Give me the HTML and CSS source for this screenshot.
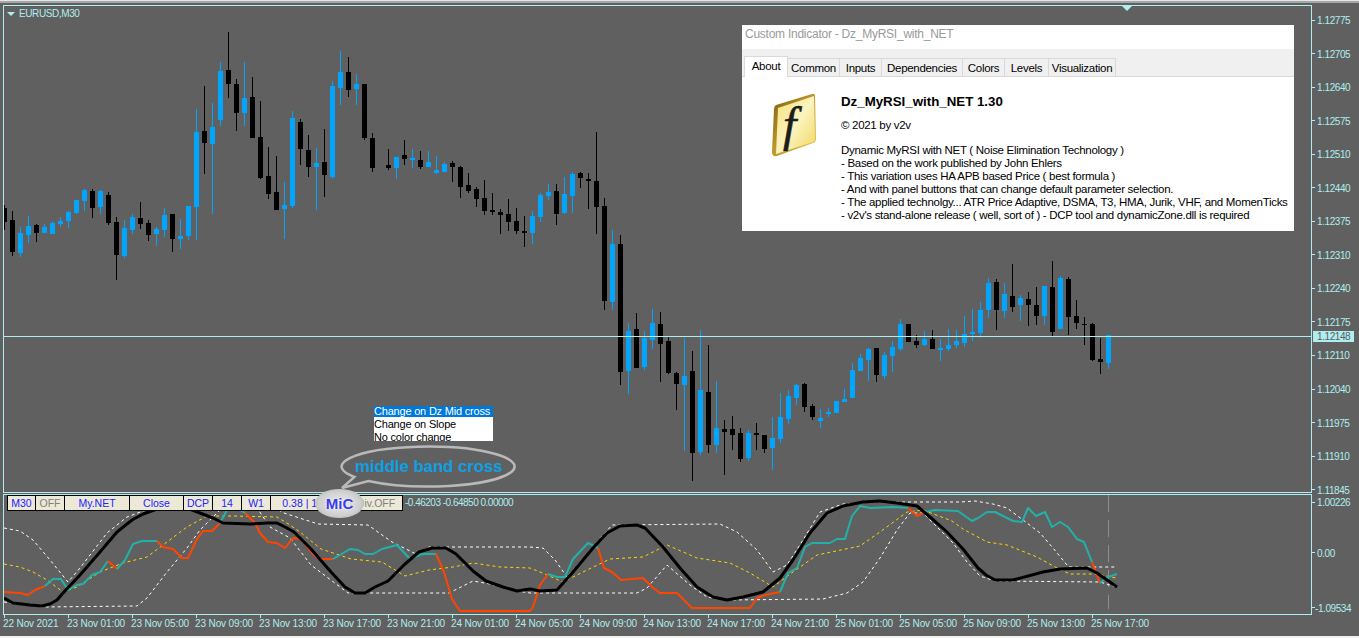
FILE: index.html
```html
<!DOCTYPE html>
<html lang="en">
<head>
<meta charset="utf-8">
<title>EURUSD,M30</title>
<link rel="stylesheet" href="styles.css">
</head>
<body>
<div class="terminal">
  <div class="strip-top"></div>

  <section class="pane pane-main">
    <svg id="candles" class="plot" width="1307" height="486" viewBox="4 6 1307 486"></svg>
  </section>
  <div class="price-axis">
    <div class="price"><i></i><span>1.12775</span></div>
    <div class="price"><i></i><span>1.12705</span></div>
    <div class="price"><i></i><span>1.12640</span></div>
    <div class="price"><i></i><span>1.12575</span></div>
    <div class="price"><i></i><span>1.12510</span></div>
    <div class="price"><i></i><span>1.12440</span></div>
    <div class="price"><i></i><span>1.12375</span></div>
    <div class="price"><i></i><span>1.12310</span></div>
    <div class="price"><i></i><span>1.12240</span></div>
    <div class="price"><i></i><span>1.12175</span></div>
    <div class="price"><i></i><span>1.12110</span></div>
    <div class="price"><i></i><span>1.12040</span></div>
    <div class="price"><i></i><span>1.11975</span></div>
    <div class="price"><i></i><span>1.11910</span></div>
    <div class="price"><i></i><span>1.11845</span></div>
  </div>

  <section class="pane pane-sub">
    <svg class="plot" width="1307" height="119" viewBox="4 495 1307 119">
      <line class="now-line" x1="1108.5" y1="495" x2="1108.5" y2="609"/>
      <polyline class="band" points="4,528 20,531 33,540 50,560 68,582 80,568 107,533 127,517 143,511 160,505 270,505 284,513 318,524 368,525 392,542 416,554 429,547 530,547 543,548 555,560 567,577 580,562 612,525 720,524 737,532 757,550 773,572 787,565 803,540 820,512 843,504 873,502 960,502 975,501 993,504 1007,508 1027,523 1040,533 1053,548 1067,565 1070,567 1116,567"/>
      <polyline class="band" points="4,602 43,607 137,606 147,598 167,572 187,548 200,530 210,520 225,505 255,505 270,527 290,538 311,565 348,593 449,593 473,581 490,584 517,591 530,593 637,593 647,588 667,565 690,585 707,597 727,600 823,599 847,593 863,582 880,558 897,530 910,513 923,513 953,543 967,562 980,576 995,581 1100,582 1116,587"/>
      <polyline class="signal" points="4,564 20,567 33,572 47,580 63,592 77,587 100,572 123,563 147,557 167,542 187,527 207,516 233,516 277,517 290,525 300,532 321,549 351,559 382,562 405,576 429,570 453,567 473,563 500,567 530,568 540,572 563,582 587,570 610,559 643,557 667,545 697,558 730,563 750,573 773,587 793,572 817,555 860,546 880,532 907,512 923,510 952,521 963,529 987,542 1007,545 1037,557 1057,568 1070,574 1097,574 1116,578"/>
      <polyline class="down" points="4,592 20,593 28,595 35,590 45,586"/>
      <polyline class="up" points="45,586 53,579 61,579 68,590 77,585 83,584 92,575 100,572 108,561"/>
      <polyline class="down" points="108,561 117,569"/>
      <polyline class="up" points="117,569 125,560 133,544 142,541 157,541"/>
      <polyline class="down" points="157,541 163,547 173,549 182,558 188,558 197,539 203,531 212,531 220,523"/>
      <polyline class="up" points="220,523 227,510 240,510 245,513"/>
      <polyline class="down" points="245,513 255,523 260,533 268,542 277,543 285,548 293,538 301,539 314,555 319,559 333,559"/>
      <polyline class="up" points="333,559 350,549 358,550 365,554 373,554 382,549 397,545 410,559 422,554 436,554"/>
      <polyline class="down" points="436,554 444,572 452,599 460,611 530,611 533,607 540,585 548,574"/>
      <polyline class="up" points="548,574 557,577 565,577 573,559 588,543 598,548"/>
      <polyline class="down" points="598,548 604,568 612,572 621,580 643,578 652,587 660,593 677,593 692,608 750,608 757,598 765,595 780,592"/>
      <polyline class="up" points="780,592 788,573 797,568 805,547 812,543 830,543 837,539 845,539 852,516 860,506 870,508 893,507 908,508"/>
      <polyline class="down" points="908,508 917,516 925,512"/>
      <polyline class="up" points="925,512 935,510 958,511 972,521 978,518 987,512 995,512 1013,521 1022,522 1028,508 1036,516 1045,512 1052,527 1060,522 1068,527 1077,539 1084,542 1092,562"/>
      <polyline class="down" points="1092,562 1100,583"/>
      <polyline class="up" points="1100,583 1108,577 1117,574"/>
      <polyline class="main" points="4,598 13,603 30,605 42,606 50,604 57,600 63,593 80,575 100,552 117,532 132,520 143,514 157,509 187,508 200,513 213,518 223,523 250,524 267,523 277,523 287,528 294,532 311,549 331,572 345,587 355,593 365,593 375,587 388,581 405,564 419,552 432,548 446,548 456,554 473,571 486,581 503,587 517,591 530,589 540,591 557,590 573,572 593,548 607,533 620,526 637,525 645,528 663,547 680,568 697,587 713,597 727,600 743,597 763,592 780,578 793,560 810,533 827,513 843,506 863,502 880,501 897,503 917,506 930,517 947,532 963,549 978,568 986,575 995,580 1013,580 1043,572 1060,569 1087,568 1097,573 1107,580 1117,587"/>
    </svg>
  </section>
  <div class="price-axis price-axis-sub">
    <div class="price"><i></i><span>1.00226</span></div>
    <div class="price"><i></i><span>0.00</span></div>
    <div class="price"><i></i><span class="neg">-1.09534</span></div>
  </div>

  <div class="time-axis">
    <div class="time">22 Nov 2021</div>
    <div class="time">23 Nov 01:00</div>
    <div class="time">23 Nov 05:00</div>
    <div class="time">23 Nov 09:00</div>
    <div class="time">23 Nov 13:00</div>
    <div class="time">23 Nov 17:00</div>
    <div class="time">23 Nov 21:00</div>
    <div class="time">24 Nov 01:00</div>
    <div class="time">24 Nov 05:00</div>
    <div class="time">24 Nov 09:00</div>
    <div class="time">24 Nov 13:00</div>
    <div class="time">24 Nov 17:00</div>
    <div class="time">24 Nov 21:00</div>
    <div class="time">25 Nov 01:00</div>
    <div class="time">25 Nov 05:00</div>
    <div class="time">25 Nov 09:00</div>
    <div class="time">25 Nov 13:00</div>
    <div class="time">25 Nov 17:00</div>
  </div>
  <div class="strip-bottom"></div>

  <!-- overlays drawn on top of the chart -->
  <div class="legend"><i class="legend-arrow"></i><span>EURUSD,M30</span></div>
  <i class="shift-marker"></i>
  <div class="price-now">1.12148</div>

  <div class="dialog">
    <div class="dialog-title">Custom Indicator - Dz_MyRSI_with_NET</div>
    <div class="tabs">
      <div class="tab tab-active">About</div>
      <div class="tab tab-common">Common</div>
      <div class="tab tab-inputs">Inputs</div>
      <div class="tab tab-deps">Dependencies</div>
      <div class="tab tab-colors">Colors</div>
      <div class="tab tab-levels">Levels</div>
      <div class="tab tab-vis">Visualization</div>
    </div>
    <div class="about">
      <svg class="about-icon" width="46" height="66" viewBox="0 0 46 66">
        <defs>
          <linearGradient id="tile" x1="0" y1="0" x2="1" y2="1">
            <stop offset="0" stop-color="#f7e27a"/>
            <stop offset=".5" stop-color="#fbf3bf"/>
            <stop offset="1" stop-color="#f3d85e"/>
          </linearGradient>
          <linearGradient id="rim" x1="0" y1="0" x2="1" y2="1">
            <stop offset="0" stop-color="#7d5f16"/>
            <stop offset=".5" stop-color="#c09a28"/>
            <stop offset="1" stop-color="#ecd05a"/>
          </linearGradient>
        </defs>
        <path d="M5 12 Q3 13 3 16 L1 59 Q1 64 6 63 L42 50 Q45 49 45 46 L44 3 Q44 0 41 1 Z" fill="url(#rim)"/>
        <path d="M7 15 L43 3 L44 46 Q44 48 42 49 L5 61 Z" fill="url(#tile)"/>
        <text class="about-f" x="12" y="48">f</text>
      </svg>
      <div class="about-text">
        <h1 class="about-name">Dz_MyRSI_with_NET 1.30</h1>
        <p class="about-copy">© 2021 by v2v</p>
        <p class="about-desc">Dynamic MyRSI with NET ( Noise Elimination Technology )<br>
- Based on the work published by John Ehlers<br>
- This variation uses HA APB based Price ( best formula )<br>
- And with panel buttons that can change default parameter selection.<br>
- The applied technolgy... ATR Price Adaptive, DSMA, T3, HMA, Jurik, VHF, and MomenTicks<br>
- v2v's stand-alone release ( well, sort of ) - DCP tool and dynamicZone.dll is required</p>
      </div>
    </div>
  </div>

  <ul class="dropdown">
    <li class="dropdown-on">Change on Dz Mid cross</li>
    <li>Change on Slope</li>
    <li>No color change</li>
  </ul>

  <div class="bubble">
    <svg class="bubble-shape" width="180" height="48" viewBox="339 443 180 48">
      <path d="M354.4 477A86.5 20 0 1 1 368.4 481L342 488Z"/>
    </svg>
    <span class="bubble-text">middle band cross</span>
  </div>

  <div class="panel">
    <div class="btn w29">M30</div>
    <div class="btn btn-off w29">OFF</div>
    <div class="btn w65">My.NET</div>
    <div class="btn w54">Close</div>
    <div class="btn w29">DCP</div>
    <div class="btn w29">14</div>
    <div class="btn w29">W1</div>
    <div class="btn w79">0.38 | 13.00</div>
    <div class="btn btn-off w53">Div.OFF</div>
    <div class="panel-values">-0.46203 -0.64850 0.00000</div>
  </div>

  <div class="mic">MiC</div>
</div>
<script src="chart.js"></script>
</body>
</html>
```

FILE: styles.css
```css
* { box-sizing: border-box; }
html, body { margin: 0; padding: 0; overflow: hidden; }
body { background: #606060; font-family: "Liberation Sans", Arial, sans-serif; }

.terminal {
  position: relative;
  width: 1359px;
  height: 638px;
  overflow: hidden;
  background: #606060;
  color: #afeeee;
  display: grid;
  grid-template-columns: 1312px 47px;
  grid-template-rows: 5px 489px 121px 21px 2px;
}

.strip-top {
  grid-column: 1 / 3;
  height: 3px;
  border-top: 1px solid #e6e6e6;
  background: #a6a6a6;
}
.strip-bottom {
  grid-column: 1 / 3;
  background: #f0f0f0;
}

.pane {
  position: relative;
  margin-left: 3px;
  border: 1px solid #afeeee;
  overflow: hidden;
}
.pane-main { height: 488px; }
.pane-sub { height: 121px; }
.plot { position: absolute; left: 0; top: 0; display: block; }

/* price scale */
.price-axis {
  padding-top: 9px;
  font-size: 10px;
  letter-spacing: -0.42px;
  line-height: 12px;
}
.price {
  display: flex;
  align-items: center;
  gap: 2px;
  height: 12px;
  margin-bottom: 21.55px;
  white-space: nowrap;
}
.price span { position: relative; top: 1px; }
.price i { width: 3px; height: 1px; background: #afeeee; flex: none; }
.price-axis-sub { padding-top: 2px; }
.price-axis-sub .price:nth-child(1) { margin-bottom: 38.5px; }
.price-axis-sub .price:nth-child(2) { margin-bottom: 43px; }
.neg { margin-left: -2px; }

/* time scale */
.time-axis {
  grid-column: 1 / 3;
  display: flex;
  padding-left: 4px;
  font-size: 10px;
  line-height: 12px;
  letter-spacing: -0.12px;
}
.time {
  position: relative;
  flex: 0 0 64px;
  margin: 0;
  padding-top: 3px;
  border-left: 1px solid #afeeee;
  height: 3px;
  white-space: nowrap;
  text-indent: -2px;
}

/* indicator lines */
polyline { fill: none; stroke-linejoin: round; }
.main { stroke: #000; stroke-width: 3; }
.up { stroke: #20b2aa; stroke-width: 2; }
.down { stroke: #ff4500; stroke-width: 2; }
.signal { stroke: #ffd700; stroke-width: 1; stroke-dasharray: 3 3; }
.band { stroke: #fff; stroke-width: 1; stroke-dasharray: 3 3; }
.now-line { stroke: #8f8f8f; stroke-width: 1; stroke-dasharray: 17 8; }

/* legend and markers */
.legend {
  position: absolute;
  left: 7px;
  top: 8px;
  display: flex;
  align-items: center;
  gap: 4px;
  font-size: 10px;
  letter-spacing: -0.4px;
  line-height: 12px;
}
.legend-arrow {
  width: 0;
  height: 0;
  border-left: 4px solid transparent;
  border-right: 4px solid transparent;
  border-top: 4px solid #afeeee;
}
.shift-marker {
  position: absolute;
  left: 1122px;
  top: 6px;
  width: 0;
  height: 0;
  border-left: 5px solid transparent;
  border-right: 5px solid transparent;
  border-top: 5px solid #afeeee;
}
.price-now {
  position: absolute;
  left: 1313px;
  top: 331px;
  width: 41px;
  height: 11px;
  padding-left: 4px;
  background: #afeeee;
  color: #606060;
  font-size: 10px;
  letter-spacing: -0.42px;
  line-height: 12px;
}

/* about dialog */
.dialog {
  position: absolute;
  left: 742px;
  top: 25px;
  width: 552px;
  height: 206px;
  background: #fff;
  color: #000;
  font-size: 11.5px;
  letter-spacing: -0.3px;
  line-height: 13px;
}
.dialog-title {
  height: 24px;
  padding: 1px 0 0 3px;
  color: #9a9a9a;
  font-size: 12px;
  letter-spacing: -0.25px;
  line-height: 17px;
}
.tabs {
  height: 28px;
  display: flex;
  align-items: flex-end;
  padding-left: 2px;
  background: #f0f0f0;
  border-bottom: 1px solid #d9d9d9;
}
.tab {
  height: 18px;
  border: 1px solid #d9d9d9;
  border-left: 0;
  border-bottom: 0;
  text-align: center;
  line-height: 19px;
  white-space: nowrap;
}
.tab-active {
  position: relative;
  width: 44px;
  height: 21px;
  margin-bottom: -1px;
  background: #fff;
  border-left: 1px solid #d9d9d9;
  line-height: 19px;
}
.tab-common { width: 52px; }
.tab-inputs { width: 42px; }
.tab-deps { width: 81px; }
.tab-colors { width: 42px; }
.tab-levels { width: 44px; }
.tab-vis { width: 67px; }

.about {
  display: flex;
  padding: 16px 0 0 29px;
}
.about-icon { flex: none; }
.about-f {
  font-family: "Liberation Serif", serif;
  font-style: italic;
  font-size: 48px;
  fill: #1c1c1c;
  stroke: #1c1c1c;
  stroke-width: 0.6;
}
.about-text { margin-left: 24px; margin-top: 1px; }
.about-name { margin: 0; font-size: 13.3px; letter-spacing: 0; font-weight: bold; line-height: 15px; }
.about-copy { margin: 9px 0 0; line-height: 14px; }
.about-desc { margin: 12px 0 0; white-space: nowrap; }

/* parameter dropdown */
.dropdown {
  position: absolute;
  left: 374px;
  top: 406px;
  width: 119px;
  height: 35px;
  margin: 0;
  padding: 0;
  overflow: hidden;
  list-style: none;
  background: #fff;
  color: #000;
  font-size: 11px;
  letter-spacing: -0.2px;
  line-height: 13px;
}
.dropdown li { height: 13px; margin-top: -1px; margin-bottom: 1px; white-space: nowrap; }
.dropdown-on { background: #0078d7; color: #fff; height: 11px !important; margin: 0 !important; line-height: 11px; }
.dropdown li:nth-child(2) { margin-top: 1px; }

/* speech bubble */
.bubble {
  position: absolute;
  left: 339px;
  top: 443px;
  width: 180px;
  height: 48px;
}
.bubble-shape { position: absolute; left: 0; top: 0; }
.bubble-shape path { fill: none; stroke: #b9b9b9; stroke-width: 2.5; }
.bubble-text {
  position: absolute;
  left: 16px;
  top: 14px;
  color: #0ea0e6;
  font-size: 16.7px;
  font-weight: bold;
  line-height: 20px;
  white-space: nowrap;
}

/* button panel */
.panel {
  position: absolute;
  left: 7px;
  top: 495px;
  display: flex;
  height: 16px;
}
.btn {
  height: 16px;
  background: #ece9d8;
  border: 1px solid #000;
  border-left: 0;
  color: #2222ff;
  font-size: 10.5px;
  line-height: 15px;
  text-align: center;
  white-space: nowrap;
}
.btn:first-child { border-left: 1px solid #000; }
.btn-off { color: #808080; }
.w29 { width: 29px; }
.w54 { width: 54px; }
.w65 { width: 65px; }
.w79 { width: 79px; }
.w53 { width: 53px; }
.panel-values {
  margin-left: 2px;
  font-size: 10px;
  letter-spacing: -0.5px;
  line-height: 16px;
  white-space: nowrap;
}

.mic {
  position: absolute;
  left: 315px;
  top: 489px;
  width: 49px;
  height: 29px;
  border-radius: 50%;
  background: radial-gradient(ellipse at center, #ececec 0%, #cfcfcf 60%, #9c9c9c 100%);
  color: #3a3aef;
  font-size: 15px;
  font-weight: bold;
  line-height: 29px;
  text-align: center;
  text-shadow: 0 0 2px #fff;
}
```

FILE: chart.js
```js
// k, colour (1 = up/blue, 0 = down/black), body top, body bottom, wick top, wick bottom.
var BARS = [
[0,0,208,222,205,230],[1,0,220,252,211,256],[2,1,233,253,227,257],[3,1,226,235,216,243],
[4,0,225,233,224,242],[5,1,227,233,224,233],[6,1,223,234,221,234],[7,1,221,224,217,227],
[8,1,212,221,211,228],[9,1,200,213,200,214],[10,1,190,201,189,211],[11,0,191,208,189,218],
[12,1,191,207,190,214],[13,0,195,223,192,225],[14,0,222,255,217,280],[15,1,228,256,220,258],
[16,1,217,230,214,234],[17,0,218,224,202,229],[18,0,223,235,220,241],[19,1,229,234,227,246],
[20,1,215,230,208,237],[21,0,214,239,214,252],[22,1,236,239,219,249],[23,1,206,236,206,240],
[24,1,132,207,109,240],[25,0,131,143,86,174],[26,1,127,144,103,214],[27,1,71,120,62,126],
[28,0,70,84,32,98],[29,0,84,113,79,131],[30,1,98,113,62,126],[31,0,97,138,77,138],
[32,0,137,178,101,179],[33,0,176,194,147,199],[34,0,192,210,156,210],[35,1,205,209,182,239],
[36,1,118,206,111,208],[37,0,122,149,119,165],[38,0,150,167,135,177],[39,1,163,167,148,210],
[40,0,162,175,129,197],[41,1,86,177,81,179],[42,1,72,88,51,105],[43,0,72,90,57,97],
[44,1,84,89,74,105],[45,0,84,138,84,140],[46,0,138,168,133,172],[48,0,165,168,149,170],
[49,1,157,168,157,179],[50,0,155,159,140,165],[51,1,158,160,149,168],[52,0,160,167,151,169],
[53,1,162,167,151,167],[54,1,170,173,156,174],[55,1,164,172,162,172],[56,0,163,167,161,182],
[57,0,167,187,166,198],[58,0,185,191,173,193],[59,0,189,199,187,207],[60,0,198,211,180,215],
[61,0,210,212,193,215],[62,0,212,215,209,234],[63,0,214,222,199,231],[64,0,221,231,208,234],
[65,0,231,233,216,247],[66,1,216,233,211,244],[67,1,195,217,193,222],[68,1,192,196,184,200],
[69,0,191,214,184,225],[70,1,194,213,177,214],[71,1,174,196,172,213],[72,0,173,178,172,188],
[73,0,179,181,173,209],[74,0,181,207,132,234],[75,0,206,301,198,310],[76,1,244,302,230,310],
[77,0,244,372,235,385],[78,1,331,371,323,394],[79,0,329,368,313,368],[80,1,338,367,331,370],
[81,1,323,340,309,349],[82,0,324,344,312,382],[83,0,341,373,336,374],[84,0,373,384,372,410],
[85,1,376,385,338,451],[86,0,371,453,351,481],[87,1,390,452,330,455],[88,0,392,445,345,453],
[89,1,428,445,381,453],[90,0,429,432,420,475],[91,0,429,435,416,450],[92,0,433,459,428,462],
[93,1,433,458,430,461],[94,0,433,435,423,450],[95,0,435,449,435,453],[96,1,438,448,417,470],
[97,1,417,439,393,443],[98,1,396,419,390,424],[99,1,385,398,384,405],[100,0,384,407,383,412],
[101,0,406,417,404,420],[102,1,418,421,409,428],[103,1,412,414,408,417],[104,1,401,413,401,413],
[105,1,399,402,389,402],[106,1,370,398,363,398],[107,1,358,371,354,371],[108,1,349,360,348,381],
[109,0,348,375,348,382],[110,1,355,376,352,379],[111,1,347,356,341,372],[112,1,324,349,319,351],
[113,0,324,342,324,342],[114,0,341,345,335,348],[115,1,339,345,331,346],[116,0,339,349,330,349],
[117,1,348,350,339,361],[118,1,345,349,329,351],[119,1,341,345,330,348],[120,1,334,343,316,347],
[121,1,332,334,309,341],[122,1,310,333,302,338],[123,1,283,310,278,318],[124,0,282,310,279,330],
[125,1,294,311,283,318],[126,0,296,307,264,312],[127,1,298,305,295,321],[128,0,299,305,292,326],
[129,0,305,316,287,325],[130,1,286,316,286,325],[131,0,287,332,261,336],[132,1,278,329,276,329],
[133,0,279,317,277,335],[134,0,316,323,300,329],[135,0,324,325,317,345],[136,0,324,360,323,361],
[137,0,359,362,338,374],[138,1,335,363,335,369]
];

(function () {
  var svg = document.getElementById('candles');
  var NS = 'http://www.w3.org/2000/svg';
  var d = ['', ''];
  BARS.forEach(function (b) {
    var x = 4 + 8 * b[0];
    d[b[1]] += 'M' + x + ' ' + b[4] + 'h1V' + b[5] + 'h-1Z';
    d[b[1]] += 'M' + (x - 2) + ' ' + b[2] + 'h5V' + b[3] + 'h-5Z';
  });
  ['#000000', '#00a5ff'].forEach(function (fill, i) {
    var p = document.createElementNS(NS, 'path');
    p.setAttribute('d', d[i]);
    p.setAttribute('fill', fill);
    p.setAttribute('shape-rendering', 'crispEdges');
    svg.appendChild(p);
  });
  var line = document.createElementNS(NS, 'rect');
  line.setAttribute('x', 4);
  line.setAttribute('y', 336);
  line.setAttribute('width', 1307);
  line.setAttribute('height', 1);
  line.setAttribute('fill', '#afeeee');
  svg.appendChild(line);
})();
```
